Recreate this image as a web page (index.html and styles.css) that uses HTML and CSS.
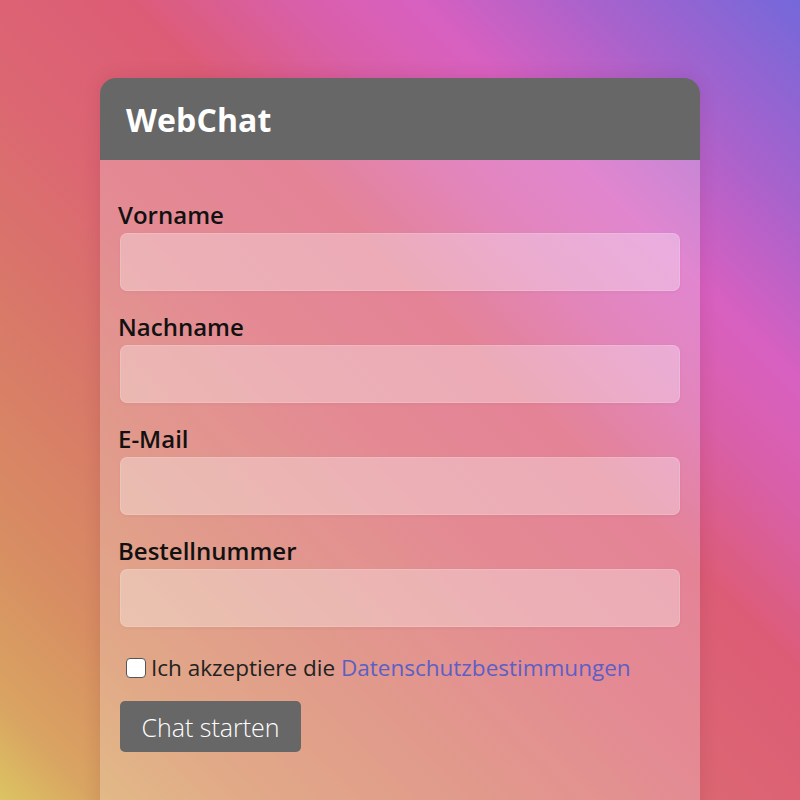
FILE: index.html
```html
<!DOCTYPE html>
<html lang="de">
<head>
<meta charset="utf-8">
<title>WebChat</title>
<link rel="stylesheet" href="styles.css">
</head>
<body>
<div class="page">
  <div class="card">
    <div class="card-header">
      <h1 class="title">WebChat</h1>
    </div>
    <form class="card-body">
      <div class="field">
        <label class="label" for="vorname">Vorname</label>
        <input class="input" id="vorname" type="text">
      </div>
      <div class="field">
        <label class="label" for="nachname">Nachname</label>
        <input class="input" id="nachname" type="text">
      </div>
      <div class="field">
        <label class="label" for="email">E-Mail</label>
        <input class="input" id="email" type="email">
      </div>
      <div class="field">
        <label class="label" for="bestell">Bestellnummer</label>
        <input class="input" id="bestell" type="text">
      </div>
      <label class="consent">
        <span class="box"></span>
        <span class="consent-text">Ich akzeptiere die <a class="link" href="#">Datenschutzbestimmungen</a></span>
      </label>
      <button class="btn" type="button">Chat starten</button>
    </form>
  </div>
</div>
</body>
</html>
```

FILE: styles.css
```css
html, body {
  margin: 0;
  padding: 0;
  height: 800px;
  overflow: hidden;
}

body {
  font-family: "Open Sans", "Noto Sans", sans-serif;
  background: linear-gradient(45deg,
    #dcc462 0%,
    #d9a462 6%,
    #d88e62 16%,
    #d87a68 30%,
    #dc6672 45%,
    #dc5c76 58%,
    #d95fa8 68%,
    #d860c0 76%,
    #a862cc 87%,
    #7468da 100%);
}

.page {
  padding-top: 78px;
  display: flex;
  justify-content: center;
}

.card {
  width: 600px;
  border-radius: 16px 16px 0 0;
  overflow: hidden;
  box-shadow: 0 0 18px rgba(80, 20, 40, 0.12);
}

.card-header {
  background: #676767;
  height: 82px;
  display: flex;
  align-items: center;
  padding: 0 26px;
}

.title {
  margin: 0;
  color: #fff;
  font-family: "Open Sans", sans-serif;
  font-weight: 700;
  font-size: 32px;
  letter-spacing: 0.1px;
}

.card-body {
  background: rgba(255, 255, 255, 0.24);
  padding: 40px 20px 80px 18px;
  display: flex;
  flex-direction: column;
}

.field {
  display: flex;
  flex-direction: column;
  margin-bottom: 21px;
}

.label {
  font-family: "Open Sans", sans-serif;
  font-weight: 600;
  font-size: 24px;
  line-height: 29px;
  color: #111;
  margin-bottom: 4px;
}

.input {
  height: 58px;
  box-sizing: border-box;
  margin: 0 0 0 2px;
  border: 1px solid rgba(255, 255, 255, 0.14);
  border-radius: 7px;
  background: rgba(255, 255, 255, 0.32);
  box-shadow: 0 1px 3px rgba(120, 40, 60, 0.06);
  outline: none;
}

.consent {
  display: flex;
  align-items: center;
  margin: 5px 0 0 8px;
  height: 30px;
}

.box {
  width: 20px;
  height: 20px;
  box-sizing: border-box;
  border: 1.5px solid #555;
  border-radius: 4px;
  background: #fff;
  margin-right: 5px;
}

.consent-text {
  font-family: "Open Sans", sans-serif;
  font-size: 22.5px;
  color: #222;
  line-height: 30px;
}

.link {
  color: #5b5fc7;
  text-decoration: none;
}

.btn {
  align-self: flex-start;
  margin: 18px 0 0 2px;
  width: 181px;
  height: 51px;
  border: none;
  border-radius: 5px;
  background: #676767;
  color: #fff;
  font-family: "Open Sans", sans-serif;
  font-weight: 300;
  font-size: 25px;
  padding: 0;
}
```
